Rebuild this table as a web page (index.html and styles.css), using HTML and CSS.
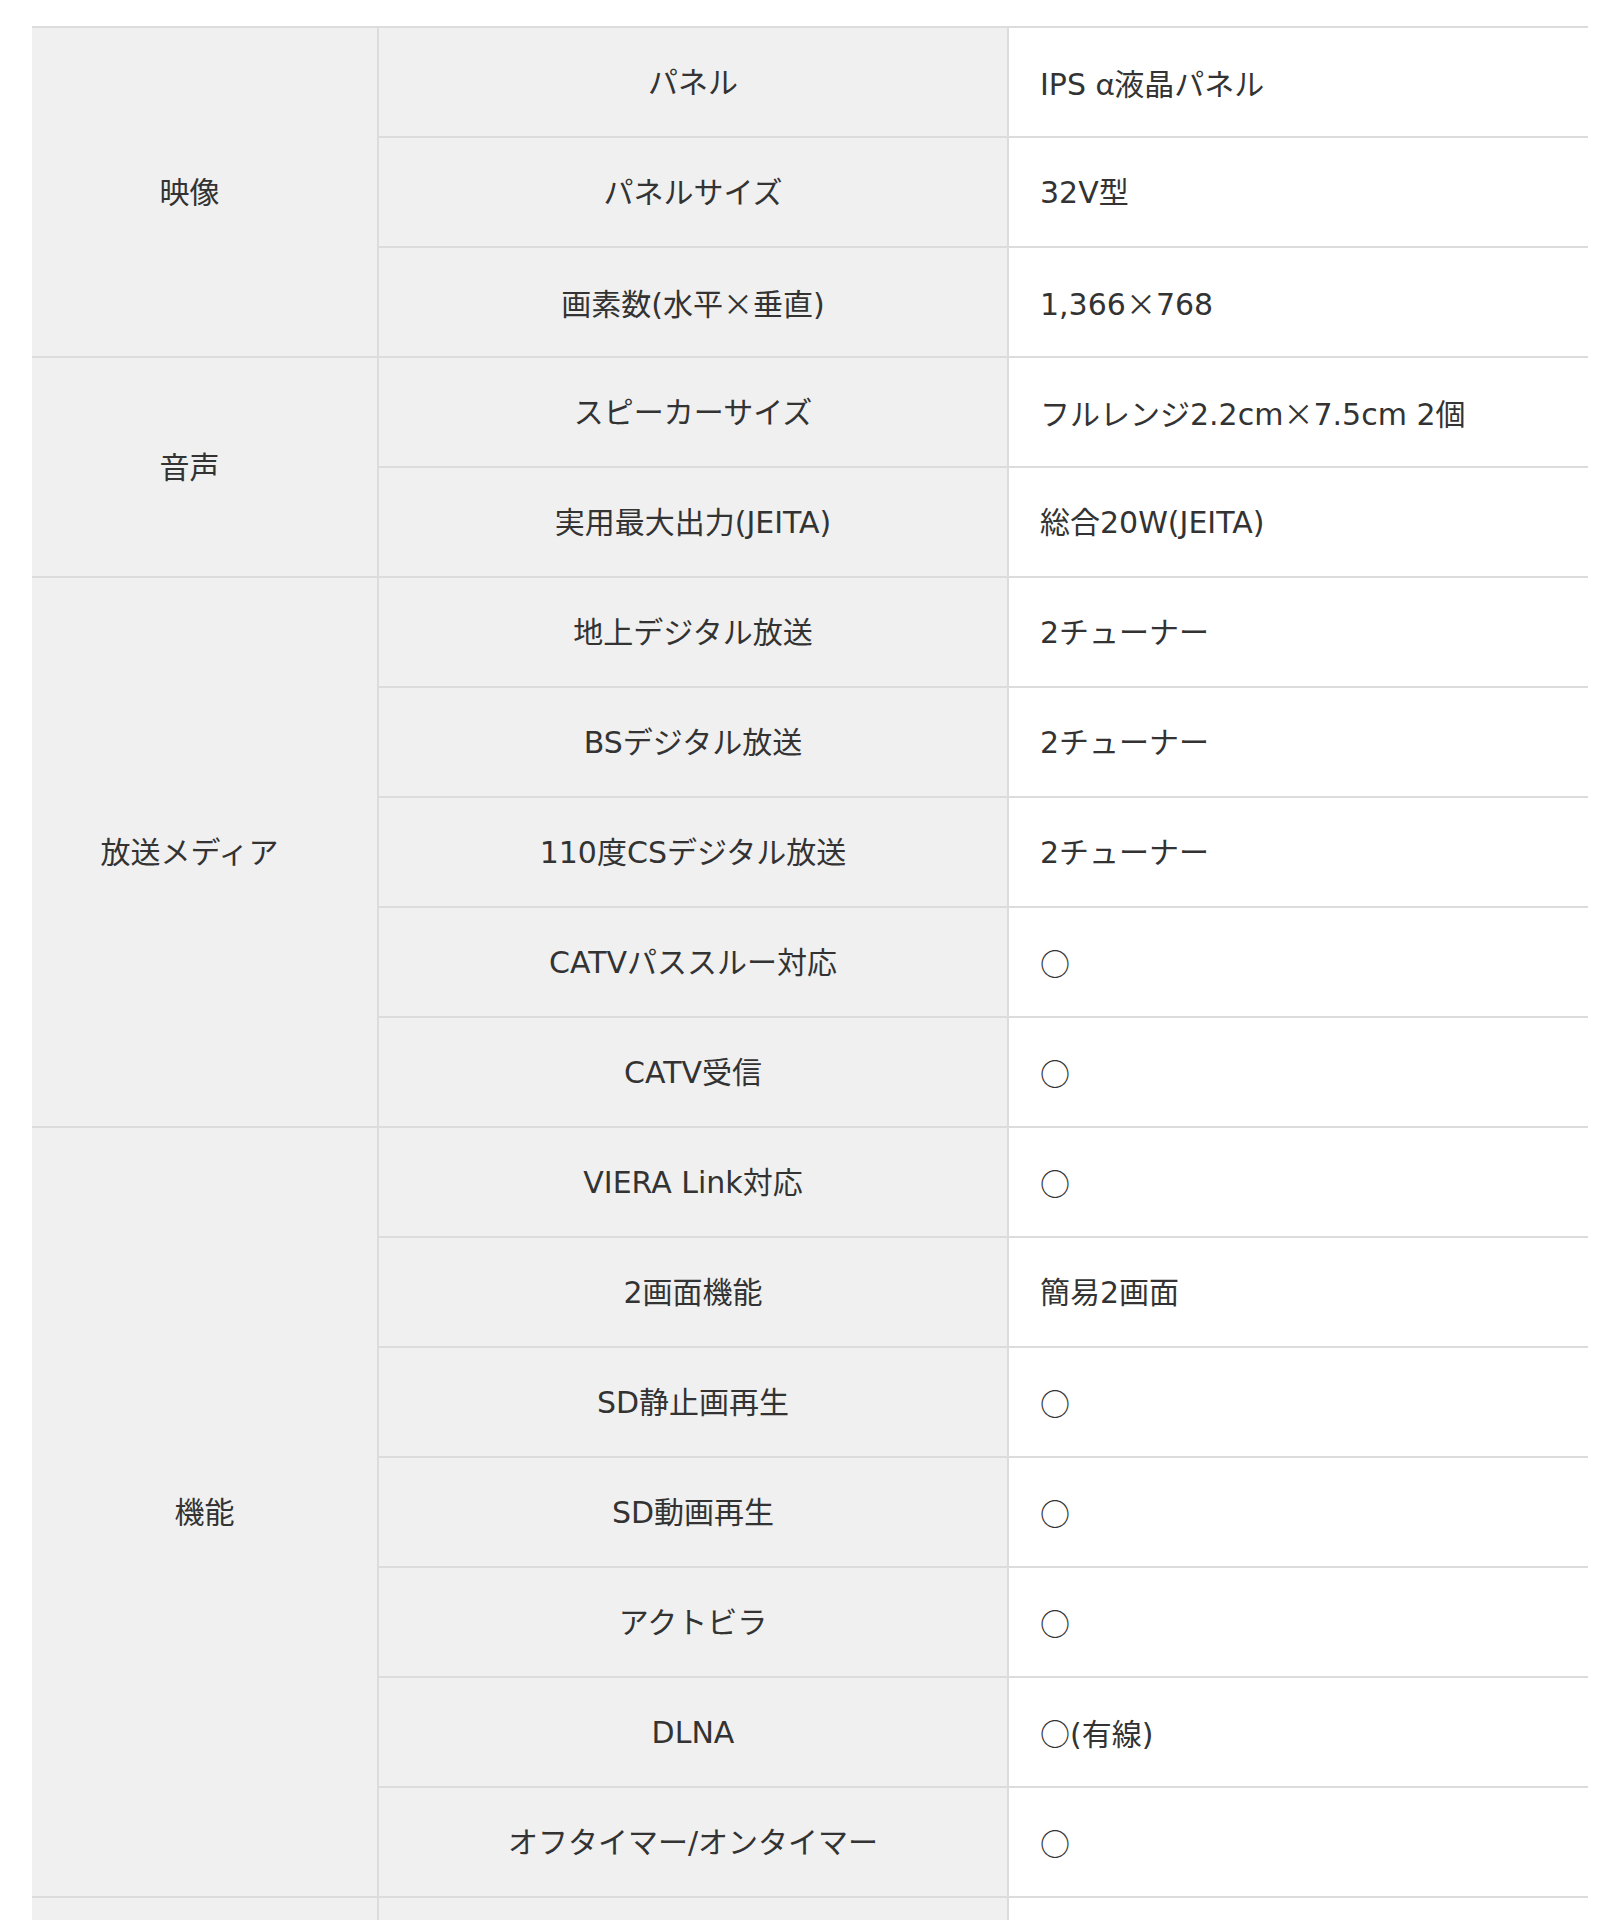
FILE: index.html
```html
<!DOCTYPE html>
<html lang="ja">
<head>
<meta charset="utf-8">
<title>仕様</title>
<link rel="stylesheet" href="styles.css">
</head>
<body>
<div class="page">
<table class="spec">
  <colgroup>
    <col class="col-cat">
    <col class="col-item">
    <col class="col-val">
  </colgroup>
  <tbody>
    <tr><th class="cat" rowspan="3">映像</th><th class="item">パネル</th><td class="val">IPS <span class="cjk">α</span>液晶パネル</td></tr>
    <tr><th class="item">パネルサイズ</th><td class="val">32V型</td></tr>
    <tr><th class="item">画素数(水平<span class="cjk">×</span>垂直)</th><td class="val">1,366<span class="cjk">×</span>768</td></tr>

    <tr><th class="cat" rowspan="2">音声</th><th class="item">スピーカーサイズ</th><td class="val">フルレンジ2.2cm<span class="cjk">×</span>7.5cm 2個</td></tr>
    <tr><th class="item">実用最大出力(JEITA)</th><td class="val">総合20W(JEITA)</td></tr>

    <tr><th class="cat" rowspan="5">放送メディア</th><th class="item">地上デジタル放送</th><td class="val">2チューナー</td></tr>
    <tr><th class="item">BSデジタル放送</th><td class="val">2チューナー</td></tr>
    <tr><th class="item">110度CSデジタル放送</th><td class="val">2チューナー</td></tr>
    <tr><th class="item">CATVパススルー対応</th><td class="val"><span class="cjk">○</span></td></tr>
    <tr><th class="item">CATV受信</th><td class="val"><span class="cjk">○</span></td></tr>

    <tr><th class="cat cat--wide" rowspan="7">機能</th><th class="item">VIERA Link対応</th><td class="val"><span class="cjk">○</span></td></tr>
    <tr><th class="item">2画面機能</th><td class="val">簡易2画面</td></tr>
    <tr><th class="item">SD静止画再生</th><td class="val"><span class="cjk">○</span></td></tr>
    <tr><th class="item">SD動画再生</th><td class="val"><span class="cjk">○</span></td></tr>
    <tr><th class="item">アクトビラ</th><td class="val"><span class="cjk">○</span></td></tr>
    <tr><th class="item">DLNA</th><td class="val"><span class="cjk">○</span>(有線)</td></tr>
    <tr><th class="item">オフタイマー/オンタイマー</th><td class="val"><span class="cjk">○</span></td></tr>

    <tr><th class="cat"></th><th class="item"></th><td class="val"></td></tr>
  </tbody>
</table>
</div>
</body>
</html>
```

FILE: styles.css
```css
html, body {
  margin: 0;
  padding: 0;
  background: #fff;
}

body {
  font-family: "DejaVu Sans", "Noto Sans CJK JP", sans-serif;
  color: #333;
}

.page {
  padding: 26px 32px 0 32px;
}

.spec {
  width: 1556px;
  border-collapse: collapse;
  table-layout: fixed;
  border-top: 2px solid #dcdcdc;
}

.col-cat { width: 346px; }
.col-item { width: 630px; }
.col-val { width: 580px; }

.spec th,
.spec td {
  height: 106px;
  padding: 2px 0 0 0;
  font-size: 30px;
  font-weight: 400;
  line-height: 42px;
  vertical-align: middle;
  border-bottom: 2px solid #dcdcdc;
}

.cjk {
  font-family: "Noto Sans CJK JP", sans-serif;
}

.spec .cat {
  background: #f0f0f0;
  text-align: center;
  padding-right: 30px;
}

.spec .cat--wide {
  padding-right: 0;
}

.spec .item {
  background: #f0f0f0;
  text-align: center;
  border-left: 2px solid #dcdcdc;
}

.spec .val {
  background: #fff;
  text-align: left;
  padding-left: 31px;
  border-left: 2px solid #dcdcdc;
}
```
